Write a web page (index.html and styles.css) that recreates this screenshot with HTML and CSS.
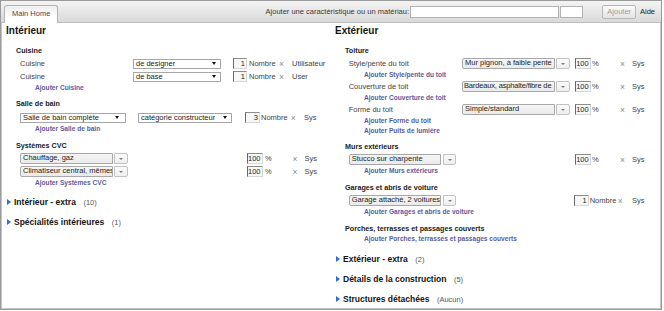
FILE: index.html
```html
<!DOCTYPE html>
<html lang="fr">
<head>
<meta charset="utf-8">
<title>Main Home</title>
<link rel="stylesheet" href="styles.css">
</head>
<body>
<div class="frame">
  <div class="topbar">
    <div class="tab">Main Home</div>
    <div class="search">
      <span class="search-label">Ajouter une caractéristique ou un matériau:</span>
      <span class="field field-main"></span>
      <span class="field field-qty"></span>
      <span class="btn">Ajouter</span>
      <span class="help">Aide</span>
    </div>
  </div>

  <div class="columns">
    <section class="col">
      <h2 class="col-title">Intérieur</h2>

      <h3 class="sub sub-first">Cuisine</h3>
      <div class="row row-k">
        <span class="lbl lbl-k">Cuisine</span>
        <span class="sel sel-k"><span class="sel-text">de designer</span><i class="sel-arrow"></i></span>
        <span class="num num-k">1</span>
        <span class="unit unit-k">Nombre</span>
        <span class="del del-k">×</span>
        <span class="src">Utilisateur</span>
      </div>
      <div class="row row-k">
        <span class="lbl lbl-k">Cuisine</span>
        <span class="sel sel-k"><span class="sel-text">de base</span><i class="sel-arrow"></i></span>
        <span class="num num-k">1</span>
        <span class="unit unit-k">Nombre</span>
        <span class="del del-k">×</span>
        <span class="src">User</span>
      </div>
      <a class="add">Ajouter Cuisine</a>

      <h3 class="sub sub-tight">Salle de bain</h3>
      <div class="row row-b">
        <span class="sel sel-b1"><span class="sel-text">Salle de bain complète</span><i class="sel-arrow"></i></span>
        <span class="sel sel-b2"><span class="sel-text">catégorie constructeur</span><i class="sel-arrow"></i></span>
        <span class="num num-b">3</span>
        <span class="unit unit-b">Nombre</span>
        <span class="del del-b">×</span>
        <span class="src">Sys</span>
      </div>
      <a class="add">Ajouter Salle de bain</a>

      <h3 class="sub">Systèmes CVC</h3>
      <div class="row row-c">
        <span class="combo combo-l"><span class="combo-field">Chauffage, gaz</span><span class="combo-btn"><i class="combo-arrow"></i></span></span>
        <span class="num num-c">100</span>
        <span class="unit unit-c">%</span>
        <span class="del del-c">×</span>
        <span class="src">Sys</span>
      </div>
      <div class="row row-c">
        <span class="combo combo-l"><span class="combo-field">Climatiseur central, mêmes</span><span class="combo-btn"><i class="combo-arrow"></i></span></span>
        <span class="num num-c">100</span>
        <span class="unit unit-c">%</span>
        <span class="del del-c">×</span>
        <span class="src">Sys</span>
      </div>
      <a class="add">Ajouter Systèmes CVC</a>

      <div class="toggle toggle-first"><i class="tri"></i><span class="toggle-name">Intérieur - extra</span><span class="count">(10)</span></div>
      <div class="toggle"><i class="tri"></i><span class="toggle-name">Spécialités intérieures</span><span class="count">(1)</span></div>
    </section>

    <section class="col">
      <h2 class="col-title">Extérieur</h2>

      <h3 class="sub sub-first">Toiture</h3>
      <div class="row row-r">
        <span class="lbl lbl-r">Style/pente du toit</span>
        <span class="combo combo-r"><span class="combo-field">Mur pignon, à faible pente</span><span class="combo-btn"><i class="combo-arrow"></i></span></span>
        <span class="num num-r">100</span>
        <span class="unit unit-r">%</span>
        <span class="del del-r">×</span>
        <span class="src">Sys</span>
      </div>
      <a class="add">Ajouter Style/pente du toit</a>
      <div class="row row-r">
        <span class="lbl lbl-r">Couverture de toit</span>
        <span class="combo combo-r"><span class="combo-field fit">Bardeaux, asphalte/fibre de</span><span class="combo-btn"><i class="combo-arrow"></i></span></span>
        <span class="num num-r">100</span>
        <span class="unit unit-r">%</span>
        <span class="del del-r">×</span>
        <span class="src">Sys</span>
      </div>
      <a class="add">Ajouter Couverture de toit</a>
      <div class="row row-r">
        <span class="lbl lbl-r">Forme du toit</span>
        <span class="combo combo-r"><span class="combo-field">Simple/standard</span><span class="combo-btn"><i class="combo-arrow"></i></span></span>
        <span class="num num-r">100</span>
        <span class="unit unit-r">%</span>
        <span class="del del-r">×</span>
        <span class="src">Sys</span>
      </div>
      <a class="add">Ajouter Forme du toit</a>
      <a class="add">Ajouter Puits de lumière</a>

      <h3 class="sub sub-tight">Murs extérieurs</h3>
      <div class="row row-r">
        <span class="combo combo-s"><span class="combo-field">Stucco sur charpente</span><span class="combo-btn"><i class="combo-arrow"></i></span></span>
        <span class="num num-s">100</span>
        <span class="unit unit-r">%</span>
        <span class="del del-r">×</span>
        <span class="src">Sys</span>
      </div>
      <a class="add">Ajouter Murs extérieurs</a>

      <h3 class="sub">Garages et abris de voiture</h3>
      <div class="row row-r">
        <span class="combo combo-s"><span class="combo-field">Garage attaché, 2 voitures</span><span class="combo-btn"><i class="combo-arrow"></i></span></span>
        <span class="num num-g">1</span>
        <span class="unit unit-g">Nombre</span>
        <span class="del del-g">×</span>
        <span class="src">Sys</span>
      </div>
      <a class="add">Ajouter Garages et abris de voiture</a>

      <h3 class="sub">Porches, terrasses et passages couverts</h3>
      <a class="add">Ajouter Porches, terrasses et passages couverts</a>

      <div class="toggle toggle-first-r"><i class="tri"></i><span class="toggle-name">Extérieur - extra</span><span class="count">(2)</span></div>
      <div class="toggle"><i class="tri"></i><span class="toggle-name">Détails de la construction</span><span class="count">(5)</span></div>
      <div class="toggle"><i class="tri"></i><span class="toggle-name">Structures détachées</span><span class="count">(Aucun)</span></div>
    </section>
  </div>
</div>
</body>
</html>
```

FILE: styles.css
```css
* { box-sizing: border-box; }

html, body {
  margin: 0;
  padding: 0;
  background: #fff;
}

body {
  font-family: "Liberation Sans", Arial, sans-serif;
  font-size: 7.5px;
  color: #3c3c3c;
}

.frame {
  width: 662px;
  height: 310px;
  border: 1px solid #9a9a9a;
  box-shadow: inset 1px 0 0 #c6c6c6, inset 0 -1px 0 #c6c6c6, inset -1px 0 0 #c6c6c6;
  overflow: hidden;
  display: flex;
  flex-direction: column;
}

/* ---------- top bar ---------- */
.topbar {
  flex: none;
  height: 22px;
  display: flex;
  align-items: flex-end;
  padding: 0 6px 0 3px;
  background: linear-gradient(#f4f4f4, #d9d9d9);
  border-bottom: 1px solid #bdbdbd;
}

.tab {
  height: 18px;
  margin-bottom: -1px;
  padding: 0 7px;
  line-height: 16px;
  color: #4d4658;
  background: linear-gradient(#eeeeee, #ffffff 70%);
  border: 1px solid #b4b4b4;
  border-bottom: 0;
  border-radius: 3px 3px 0 0;
}

.search {
  margin-left: auto;
  align-self: center;
  display: flex;
  align-items: center;
}

.search-label { color: #3a3a3a; }

.field {
  height: 12px;
  background: #fff;
  border: 1px solid #b3b3b3;
}

.field-main { width: 149px; margin-left: 1.5px; }
.field-qty { width: 23px; margin-left: 1px; }

.btn {
  margin-left: 19px;
  width: 33.5px;
  height: 14px;
  display: flex;
  align-items: center;
  justify-content: center;
  color: #9b9b9b;
  background: linear-gradient(#fbfbfb, #e3e3e3);
  border: 1px solid #b8b8b8;
  border-radius: 2px;
}

.help {
  margin-left: 4px;
  color: #222;
}

/* ---------- columns ---------- */
.columns {
  flex: 1;
  display: grid;
  grid-template-columns: 329px 1fr;
  padding: 1px 0 0 5px;
}

.col {
  display: flex;
  flex-direction: column;
  align-items: stretch;
}

.col-title {
  margin: 0;
  font-size: 10px;
  font-weight: bold;
  line-height: 14px;
  color: #151515;
}

.sub {
  margin: 6px 0 0;
  padding-left: 10px;
  font-size: 7.2px;
  font-weight: bold;
  line-height: 11px;
  color: #202020;
}

.sub-first { margin-top: 7px; }
.sub-tight { margin-top: 5px; }

.add {
  display: block;
  padding-left: 29px;
  font-size: 6.6px;
  font-weight: bold;
  line-height: 10px;
  color: #5a5c9e;
  text-decoration: none;
  white-space: nowrap;
}

/* ---------- rows ---------- */
.row {
  display: flex;
  align-items: center;
  height: 13px;
  white-space: nowrap;
}

.sub + .row { margin-top: 1px; }
.sub + .row-b { margin-top: 2px; }

.row-k, .row-b, .row-c { padding-left: 14px; }
.row-r { padding-left: 13.7px; }

.lbl { color: #444; flex: none; }
.lbl-k { width: 113px; }
.lbl-r { width: 113.3px; }

.unit, .src { color: #444; flex: none; }
.del { color: #8a8a8a; font-size: 8.5px; flex: none; line-height: 10px; }

/* native select */
.sel {
  flex: none;
  height: 10px;
  display: flex;
  align-items: center;
  justify-content: space-between;
  padding: 0 4px 0 2px;
  background: #fff;
  border: 1px solid #a7a7a7;
  color: #222;
  overflow: hidden;
}

.sel-text { overflow: hidden; }

.sel-arrow {
  flex: none;
  width: 0;
  height: 0;
  border-left: 2.5px solid transparent;
  border-right: 2.5px solid transparent;
  border-top: 3px solid #111;
}

.sel-k { width: 88px; }
.sel-b1 { width: 106px; padding-right: 6px; }
.sel-b2 { width: 94px; margin-left: 12px; }

/* combo box */
.combo {
  flex: none;
  height: 10.5px;
  display: flex;
  gap: 1.5px;
}

.combo-field {
  flex: 1;
  min-width: 0;
  overflow: hidden;
  padding-left: 2px;
  line-height: 8.5px;
  color: #222;
  background: linear-gradient(#f5f5f5, #eaeaea);
  border: 1px solid #a8a8a8;
  border-radius: 2px 0 0 2px;
}

.combo-field.fit {
  padding-left: 1px;
  letter-spacing: -0.16px;
}

.combo-btn {
  flex: none;
  width: 13.5px;
  display: flex;
  align-items: center;
  justify-content: center;
  background: linear-gradient(#fafafa, #eeeeee);
  border: 1px solid #c2c2c2;
  border-radius: 0 2px 2px 0;
}

.combo-arrow {
  width: 0;
  height: 0;
  border-left: 2px solid transparent;
  border-right: 2px solid transparent;
  border-top: 2.5px solid #7d7d7d;
}

.combo-l { width: 107.5px; }
.combo-r { width: 108px; }
.combo-s { width: 107.6px; }

/* number input */
.num {
  flex: none;
  height: 10.5px;
  display: flex;
  align-items: center;
  justify-content: flex-end;
  padding-right: 1px;
  color: #1e1e1e;
  background: #f7f7f7;
  border: 1px solid #d6d6d6;
  border-left-color: #676767;
  border-top-color: #8c8c8c;
}

.num-k { width: 14px; margin-left: 12px; }
.unit-k { width: 32px; padding-left: 2px; }
.del-k { width: 13px; }

.num-b { width: 15px; margin-left: 13px; }
.unit-b { width: 30.7px; padding-left: 1px; }
.del-b { width: 13.3px; }

.num-c { width: 15.5px; margin-left: 119.5px; }
.unit-c { width: 30px; padding-left: 2.5px; }
.del-c { width: 12px; }

.num-r { width: 15.4px; margin-left: 5.3px; }
.unit-r { width: 29.3px; padding-left: 1.3px; }
.del-r { width: 12px; }

.num-s { width: 15.4px; margin-left: 119px; }

.num-g { width: 15px; margin-left: 117.4px; }
.unit-g { width: 29px; padding-left: 1px; }
.del-g { width: 14.3px; }

/* ---------- collapsible sections ---------- */
.toggle {
  display: flex;
  align-items: center;
  height: 20px;
  white-space: nowrap;
}

.toggle-first { margin-top: 4px; }
.toggle-first-r { margin-top: 5px; }

.tri {
  flex: none;
  width: 0;
  height: 0;
  margin: 0 3.5px 0 0.5px;
  border-top: 3.5px solid transparent;
  border-bottom: 3.5px solid transparent;
  border-left: 4px solid #2c6fd8;
}

.toggle-name {
  font-size: 8.5px;
  font-weight: bold;
  color: #141414;
}

.count {
  margin-left: 7.5px;
  color: #555;
}
```
